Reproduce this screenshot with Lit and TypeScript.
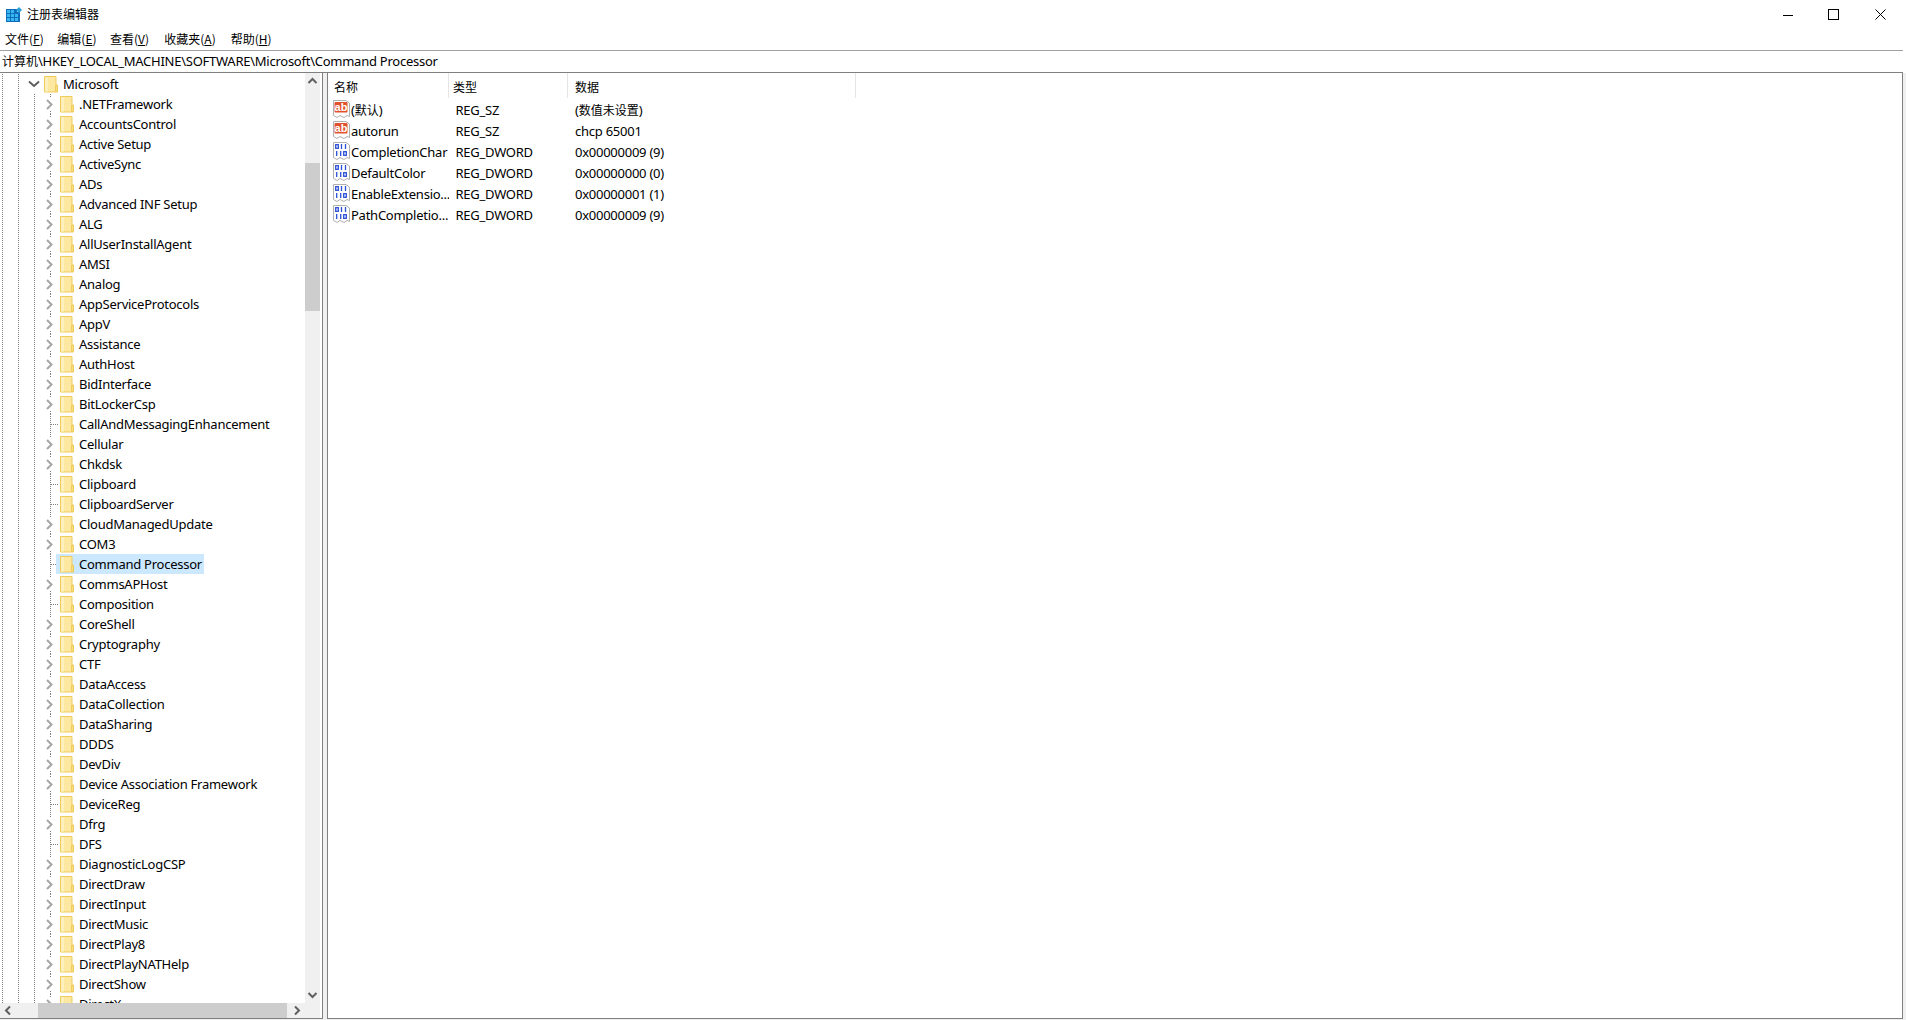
import { LitElement, html, css, svg } from "lit";
import { customElement } from "lit/decorators.js";

const KEYS = [".NETFramework","AccountsControl","Active Setup","ActiveSync","ADs","Advanced INF Setup","ALG","AllUserInstallAgent","AMSI","Analog","AppServiceProtocols","AppV","Assistance","AuthHost","BidInterface","BitLockerCsp","CallAndMessagingEnhancement","Cellular","Chkdsk","Clipboard","ClipboardServer","CloudManagedUpdate","COM3","Command Processor","CommsAPHost","Composition","CoreShell","Cryptography","CTF","DataAccess","DataCollection","DataSharing","DDDS","DevDiv","Device Association Framework","DeviceReg","Dfrg","DFS","DiagnosticLogCSP","DirectDraw","DirectInput","DirectMusic","DirectPlay8","DirectPlayNATHelp","DirectShow","DirectX"];
const LEAVES = new Set(["CallAndMessagingEnhancement","Clipboard","ClipboardServer","Command Processor","Composition","DeviceReg","DFS"]);
const VALUES: [string, string, string, string][] = [
  ["ab", "(默认)", "REG_SZ", "(数值未设置)"],
  ["ab", "autorun", "REG_SZ", "chcp 65001"],
  ["bin", "CompletionChar", "REG_DWORD", "0x00000009 (9)"],
  ["bin", "DefaultColor", "REG_DWORD", "0x00000000 (0)"],
  ["bin", "EnableExtensio...", "REG_DWORD", "0x00000001 (1)"],
  ["bin", "PathCompletio...", "REG_DWORD", "0x00000009 (9)"],
];

const folder = html`<svg class="folder" width="15" height="17" viewBox="0 0 15 17">
  <path d="M.5.5h11.500v8.500h1.500v7H.5z" fill="#fde8a2" stroke="#eecb5a"/>
  <path d="M1 1h3v14.500H1z" fill="#fdf0bd"/>
  <path d="M11.500 9.500h2v6h-2z" fill="#fbdc7c" stroke="#eecb5a"/>
</svg>`;

const chevR = svg`<path d="M5 6l4.500 4.500L5 15" fill="none" stroke="#a6a6a6" stroke-width="2"/>`;
const chevD = html`<svg class="exp0" width="16" height="20" viewBox="0 0 16 20"><path d="M3 7.500l5 4.500 5-4.500" fill="none" stroke="#595959" stroke-width="1.800"/></svg>`;
const dots = svg`<path d="M8.500 0V3M8.500 17V20" stroke="#808080" stroke-dasharray="1 1"/>`;
const leafDots = svg`<path d="M8.500 0V20M9 10.500H16" stroke="#808080" stroke-dasharray="1 1"/>`;

const page = svg`<path d="M.5.500H13L16.500 3V16.500L14 15.500 11 17.500 7 15.500 4 17.500.5 15.500z" fill="#fff" stroke="#b0b0b0"/>`;
const abIcon = html`<svg class="vicon" width="17" height="19" viewBox="0 0 17 19">
  ${page}
  <rect x="1.500" y="2" width="13" height="10.500" rx="1" fill="#e0512c"/>
  <text x="8" y="10.500" text-anchor="middle" class="abt">ab</text>
</svg>`;
const binIcon = html`<svg class="vicon" width="17" height="19" viewBox="0 0 17 19">
  ${page}
  <g fill="none" stroke="#2b4fd8" stroke-width="1.300">
    <rect x="2.700" y="2.700" width="2.600" height="3.600"/>
    <path d="M8.500 2v5M12.500 2v5M3.700 9v5M7.700 9v5"/>
    <rect x="10.700" y="9.700" width="2.600" height="3.600"/>
  </g>
</svg>`;

@customElement("app-root")
export class AppRoot extends LitElement {
  static styles = css`
    :host { display: flex; flex-direction: column; width: 1906px; height: 1020px; overflow: hidden; background: #fff; color: #000;
      font: 13px/20px "Noto Sans", "Noto Sans CJK SC", sans-serif; letter-spacing: -0.25px; }
    .cjk { font-family: "Noto Sans CJK SC", sans-serif; font-size: 12px; letter-spacing: 0; }
    .titlebar { height: 29px; flex: none; display: flex; align-items: center; padding-left: 6px; }
    .appicon { margin-right: 5px; }
    .title { flex: 1; font-family: "Noto Sans CJK SC", sans-serif; font-size: 12px; letter-spacing: 0; padding-bottom: 1px; }
    .winbtns { display: flex; margin-right: 3px; }
    .winbtn { width: 46px; height: 29px; display: flex; align-items: center; justify-content: center; }
    .winbtn.max { padding-right: 2px; box-sizing: border-box; }
    .menu { height: 21px; flex: none; display: flex; padding-left: 5px; font-family: "Noto Sans CJK SC", sans-serif; font-size: 12px; line-height: 20px; letter-spacing: 0; }
    .menu span { flex: none; }
    .addr { height: 21px; flex: none; margin-right: 3px; border-top: 1px solid #a0a0a0; border-bottom: 1px solid #808080; padding-left: 2px; line-height: 20px; white-space: nowrap; background: #fff; }
    .body { height: 947px; flex: none; display: flex; background: #f0f0f0; }
    .treepane { width: 322px; height: 945px; flex: none; background: #fff; border-right: 1px solid #808080; border-bottom: 1px solid #808080; display: grid; grid-template: 1fr 15px / 1fr 15px 2px; overflow: hidden; }
    .tree { overflow: hidden; min-width: 0; min-height: 0; padding-top: 1px; }
    .row { height: 20px; display: flex; align-items: center; padding-left: 42px; white-space: nowrap;
      background-image: linear-gradient(#808080 50%, transparent 50%), linear-gradient(#808080 50%, transparent 50%), linear-gradient(#808080 50%, transparent 50%);
      background-size: 1px 2px; background-repeat: repeat-y; background-position: 2px 0, 18px 0, 34px 0; }
    .row.top { padding-left: 26px; background-image: linear-gradient(#808080 50%, transparent 50%), linear-gradient(#808080 50%, transparent 50%); background-position: 2px 0, 18px 0; }
    .exp { flex: none; }
    .sel { display: flex; align-items: center; height: 20px; }
    .row .folder { margin-right: 2px; margin-left: 2px; flex: none; }
    .label { padding: 0 2px; height: 20px; line-height: 21px; }
    .cur .sel { background: #cce8ff; margin-left: -2px; padding-left: 2px; }
    .vbar { background: #f0f0f0; display: flex; flex-direction: column; justify-content: space-between; position: relative; }
    .vthumb { position: absolute; left: 0; top: 90px; width: 15px; height: 148px; background: #cdcdcd; }
    .hbar { background: #f0f0f0; position: relative; display: flex; justify-content: space-between; align-items: center; }
    .hthumb { position: absolute; left: 38px; top: 0; height: 15px; width: 249px; background: #cdcdcd; }
    .corner { background: #f0f0f0; }
    .sb-gap { background: #fff; grid-row: 1 / 3; grid-column: 3; }
    .arrow { display: block; }
    .split { width: 4px; flex: none; }
    .list { flex: 1; height: 945px; background: #fff; margin-right: 3px; border-left: 1px solid #808080; border-right: 1px solid #808080; border-bottom: 1px solid #808080; overflow: hidden; }
    .head { height: 26px; display: flex; }
    .hcell { height: 25px; border-right: 1px solid #e5e5e5; box-sizing: border-box; line-height: 27px; flex: none; font-family: "Noto Sans CJK SC", sans-serif; font-size: 12px; letter-spacing: 0; }
    .c1 { width: 121px; padding-left: 6px; } .c2 { width: 119px; padding-left: 4px; } .c3 { width: 288px; padding-left: 7px; }
    .vrow { height: 21px; display: flex; align-items: center; white-space: nowrap; }
    .vname { width: 121px; flex: none; display: flex; align-items: center; padding-left: 5px; box-sizing: border-box; overflow: hidden; }
    .vicon { flex: none; margin-right: 1px; }
    .abt { font: bold 11px "Liberation Sans", sans-serif; fill: #fff; letter-spacing: 0; }
    .vtype { width: 119px; flex: none; padding-left: 6.500px; box-sizing: border-box; }
    .vdata { padding-left: 7px; }
  `;

  private text(s: string) {
    const parts = s.split(/([\u4e00-\u9fff]+)/);
    return parts.map((p, i) => (i % 2 ? html`<span class="cjk">${p}</span>` : p));
  }

  render() {
    const menus: [string, string, number][] = [["文件", "F", 52.3], ["编辑", "E", 52.7], ["查看", "V", 54.3], ["收藏夹", "A", 66.4], ["帮助", "H", 45]];
    return html`
      <div class="titlebar">
        <svg class="appicon" width="16" height="16" viewBox="0 0 16 16">
          <path d="M0 2h11v3h3v10H0z" fill="#0f6cbd"/>
          <g fill="#36b7ee">
            <rect x="1" y="3" width="3" height="3"/><rect x="5" y="3" width="3" height="3"/>
            <rect x="1" y="7" width="3" height="3"/><rect x="5" y="7" width="3" height="3"/><rect x="9" y="7" width="3" height="3"/>
            <rect x="1" y="11" width="3" height="3"/><rect x="5" y="11" width="3" height="3"/><rect x="9" y="11" width="3" height="3"/>
          </g>
          <path d="M13 0l3 3-3 3-3-3z" fill="#2a9fd6"/>
        </svg>
        <div class="title">注册表编辑器</div>
        <div class="winbtns">
          <div class="winbtn"><svg width="10" height="10" viewBox="0 0 10 10"><path d="M0 5.500h10" stroke="#000"/></svg></div>
          <div class="winbtn max"><svg width="11" height="11" viewBox="0 0 11 11"><rect x=".5" y=".5" width="10" height="10" fill="none" stroke="#000"/></svg></div>
          <div class="winbtn"><svg width="11" height="11" viewBox="0 0 11 11"><path d="M.5.500l10 10M10.500.500l-10 10" stroke="#000"/></svg></div>
        </div>
      </div>
      <div class="menu">${menus.map(([a, b, w]) => html`<span style="width:${w}px">${a}(<u>${b}</u>)</span>`)}</div>
      <div class="addr"><span class="cjk">计算机</span>\\HKEY_LOCAL_MACHINE\\SOFTWARE\\Microsoft\\Command Processor</div>
      <div class="body">
        <div class="treepane">
          <div class="tree">
            <div class="row top">${chevD}<div class="sel">${folder}<span class="label">Microsoft</span></div></div>
            ${KEYS.map((k) => {
              const leaf = LEAVES.has(k);
              const cur = k === "Command Processor";
              return html`<div class="row ${cur ? "cur" : ""}">
                <svg class="exp" width="16" height="20" viewBox="0 0 16 20">${leaf ? leafDots : [dots, chevR]}</svg>
                <div class="sel">${folder}<span class="label">${k}</span></div>
              </div>`;
            })}
          </div>
          <div class="vbar">
            <svg class="arrow" width="15" height="17" viewBox="0 0 15 17"><path d="M3.500 10l4-4 4 4" fill="none" stroke="#606060" stroke-width="2"/></svg>
            <div class="vthumb"></div>
            <svg class="arrow" width="15" height="17" viewBox="0 0 15 17"><path d="M3.500 7l4 4 4-4" fill="none" stroke="#606060" stroke-width="2"/></svg>
          </div>
          <div class="sb-gap"></div>
          <div class="hbar">
            <svg class="arrow" width="17" height="15" viewBox="0 0 17 15"><path d="M10 3.500l-4 4 4 4" fill="none" stroke="#606060" stroke-width="2"/></svg>
            <div class="hthumb"></div>
            <svg class="arrow" width="17" height="15" viewBox="0 0 17 15"><path d="M7 3.500l4 4-4 4" fill="none" stroke="#606060" stroke-width="2"/></svg>
          </div>
          <div class="corner"></div>
        </div>
        <div class="split"></div>
        <div class="list">
          <div class="head">
            <div class="hcell c1">名称</div>
            <div class="hcell c2">类型</div>
            <div class="hcell c3">数据</div>
          </div>
          ${VALUES.map(([t, n, ty, d]) => html`<div class="vrow">
            <div class="vname">${t === "ab" ? abIcon : binIcon}<span>${this.text(n)}</span></div>
            <div class="vtype">${ty}</div>
            <div class="vdata">${this.text(d)}</div>
          </div>`)}
        </div>
      </div>
    `;
  }
}
